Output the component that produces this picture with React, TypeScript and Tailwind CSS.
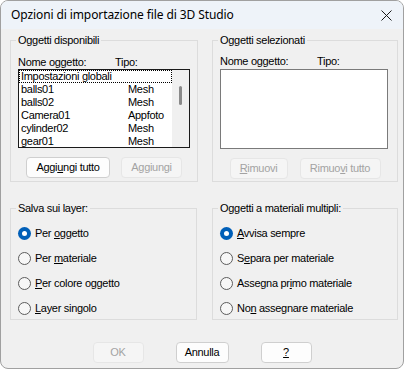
import React from "react";

const sans = "font-['Liberation_Sans',Arial,sans-serif]";

const Btn = ({
  children,
  w,
  disabled,
}: {
  children: React.ReactNode;
  w: string;
  disabled?: boolean;
}) => (
  <div
    className={`${w} h-[21px] flex items-center justify-center rounded-[4px] border text-[11px] tracking-[-0.3px] ${
      disabled
        ? "border-[#e6e6e6] bg-[#f5f5f5] text-[#a3a3a3]"
        : "border-[#cfcfcf] bg-[#fdfdfd] text-black"
    }`}
  >
    {children}
  </div>
);

const Radio = ({ checked, children }: { checked?: boolean; children: React.ReactNode }) => (
  <div className="flex items-center h-[16px]">
    {checked ? (
      <div className="w-[13px] h-[13px] rounded-full bg-[#005fb8] flex items-center justify-center">
        <div className="w-[5px] h-[5px] rounded-full bg-white" />
      </div>
    ) : (
      <div className="w-[13px] h-[13px] rounded-full border border-[#5c5c5c] bg-[#f7f7f7]" />
    )}
    <span className="ml-[4px] text-[11px] tracking-[-0.3px] text-black">{children}</span>
  </div>
);

const Legend = ({ children }: { children: React.ReactNode }) => (
  <legend className="-ml-[2px] px-[2px] text-[11px] leading-[13px] tracking-[-0.3px] text-black">
    {children}
  </legend>
);

const items = [
  ["balls01", "Mesh"],
  ["balls02", "Mesh"],
  ["Camera01", "Appfoto"],
  ["cylinder02", "Mesh"],
  ["gear01", "Mesh"],
];

export default function App() {
  return (
    <div className={`w-[404px] h-[370px] bg-white ${sans}`}>
      <div className="w-[404px] h-[369px] rounded-[8px] border border-[#a0a0a0] bg-[#f0f0f0] overflow-hidden flex flex-col">
        <div className="h-[28px] bg-[#eef3f9] flex items-center justify-between pl-[10px] pr-[11px]">
          <span className="font-['Noto_Sans',sans-serif] text-[12px] text-black tracking-[-0.1px]">
            Opzioni di importazione file di 3D Studio
          </span>
          <svg width="11" height="11" viewBox="0 0 11 11">
            <path d="M0.5 0.5 L10.5 10.5 M10.5 0.5 L0.5 10.5" stroke="#1a1a1a" strokeWidth="1" />
          </svg>
        </div>

        <div className="pl-[9px] pt-[5px] grid grid-cols-[187px_186px] gap-x-[15px] gap-y-[20px]">
          <fieldset className="h-[148px] border border-[#dcdcdc] px-[7px]">
            <Legend>Oggetti disponibili</Legend>
            <div className="mt-[9px] flex text-[11px] leading-[13px] tracking-[-0.3px]">
              <span className="w-[97px]">Nome oggetto:</span>
              <span>Tipo:</span>
            </div>
            <div className="w-[172px] h-[79px] border border-[#1a1a1a] bg-white flex overflow-hidden">
              <div className="flex-1 text-[11px] leading-[13px] tracking-[-0.3px]">
                <div className="h-[13px] border border-dotted border-black pl-[1px] leading-[11px]">
                  Impostazioni globali
                </div>
                {items.map(([n, t]) => (
                  <div key={n} className="h-[13px] flex pl-[2px]">
                    <span className="w-[107px]">{n}</span>
                    <span>{t}</span>
                  </div>
                ))}
              </div>
              <div className="w-[17px] bg-[#f0f0f0] flex justify-center">
                <div className="mt-[16px] w-[3px] h-[19px] rounded-full bg-[#8a8a8a]" />
              </div>
            </div>
            <div className="mt-[9px] flex justify-center gap-[11px]">
              <Btn w="w-[84px]">
                Aggi<u>u</u>ngi tutto
              </Btn>
              <Btn w="w-[61px]" disabled>
                Aggiungi
              </Btn>
            </div>
          </fieldset>

          <fieldset className="h-[148px] border border-[#dcdcdc] px-[7px]">
            <Legend>Oggetti selezionati</Legend>
            <div className="mt-[8px] flex text-[11px] leading-[13px] tracking-[-0.3px]">
              <span className="w-[97px]">Nome oggetto:</span>
              <span>Tipo:</span>
            </div>
            <div className="mt-[1px] w-[168px] h-[80px] border border-[#7a7a7a] bg-white" />
            <div className="mt-[9px] flex justify-center gap-[12px]">
              <Btn w="w-[58px]" disabled>
                <u>R</u>imuovi
              </Btn>
              <Btn w="w-[81px]" disabled>
                Rimuo<u>v</u>i tutto
              </Btn>
            </div>
          </fieldset>

          <fieldset className="h-[118px] border border-[#dcdcdc] px-[7px]">
            <Legend>Salva sui layer:</Legend>
            <div className="mt-[10px] flex flex-col gap-[9px]">
              <Radio checked>
                Per <u>o</u>ggetto
              </Radio>
              <Radio>
                Per <u>m</u>ateriale
              </Radio>
              <Radio>
                <u>P</u>er colore oggetto
              </Radio>
              <Radio>
                <u>L</u>ayer singolo
              </Radio>
            </div>
          </fieldset>

          <fieldset className="h-[118px] border border-[#dcdcdc] px-[7px]">
            <Legend>Oggetti a materiali multipli:</Legend>
            <div className="mt-[10px] flex flex-col gap-[9px]">
              <Radio checked>
                <u>A</u>vvisa sempre
              </Radio>
              <Radio>
                S<u>e</u>para per materiale
              </Radio>
              <Radio>
                Assegna pr<u>i</u>mo materiale
              </Radio>
              <Radio>
                No<u>n</u> assegnare materiale
              </Radio>
            </div>
          </fieldset>
        </div>

        <div className="mt-[22px] flex justify-center gap-[32px]">
          <Btn w="w-[51px]" disabled>
            OK
          </Btn>
          <Btn w="w-[53px]">Annulla</Btn>
          <Btn w="w-[51px]">
            <u>?</u>
          </Btn>
        </div>
      </div>
    </div>
  );
}
